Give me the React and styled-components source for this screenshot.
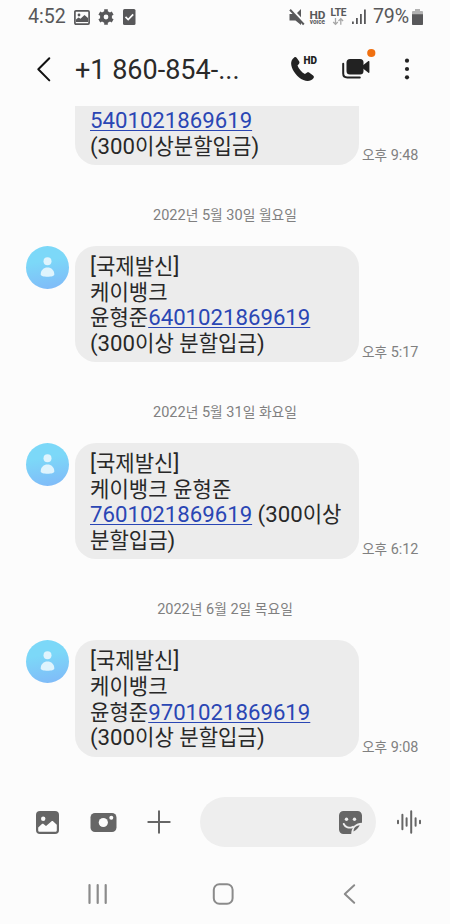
import React from "react";
import styled, { createGlobalStyle } from "styled-components";

const GlobalStyle = createGlobalStyle`
  body {
    margin: 0;
    background-color: #fcfcfc;
    font-family: Roboto, "Noto Sans CJK KR", sans-serif;
  }
`;

const Wrapper = styled.div`
  display: flex;
  flex-direction: column;
  width: 450px;
  height: 924px;
  overflow: hidden;
  background-color: #fcfcfc;
`;

const StatusBar = styled.div`
  display: flex;
  flex: none;
  align-items: center;
  height: 34px;
  padding: 0 26px 0 28px;
  box-sizing: border-box;
  color: #58585a;
  font-size: 19.6px;
  line-height: 34px;
`;

const StatusIcons = styled.div`
  display: flex;
  align-items: center;
  gap: ${(props) => props.$gap}px;
  margin-left: ${(props) => props.$left};
`;

const Battery = styled.span`
  margin-left: 6px;
  letter-spacing: -0.1px;
`;

const VoiceBadge = styled.div`
  display: flex;
  flex-direction: column;
  align-items: center;
  width: 17px;
  font-weight: 700;
`;

const VoiceText = styled.span`
  font-size: ${(props) => props.$size}px;
  line-height: ${(props) => props.$height}px;
`;

const Header = styled.header`
  display: flex;
  flex: none;
  align-items: center;
  height: 72px;
  padding: 0 39px 0 36px;
  box-sizing: border-box;
`;

const Title = styled.h1`
  flex: 1;
  margin: 0 0 0 23px;
  color: #2a2a2a;
  font-size: 27px;
  font-weight: 400;
  line-height: 34px;
  white-space: nowrap;
`;

const Actions = styled.div`
  display: flex;
  align-items: center;
`;

const IconButton = styled.button.attrs({ type: "button" })`
  display: flex;
  flex: none;
  margin: 0 0 0 ${(props) => props.$left || 0}px;
  padding: 0;
  border: none;
  background: none;
  cursor: pointer;
`;

const Chat = styled.main`
  display: flex;
  flex: none;
  flex-direction: column;
  height: 679px;
  overflow: hidden;
`;

const Row = styled.div`
  display: flex;
  flex: none;
  padding-left: ${(props) => (props.$cut ? 75 : 26)}px;
`;

const Avatar = styled.div`
  display: flex;
  flex: none;
  width: 43px;
  height: 43px;
  margin-right: 6px;
  border-radius: 50%;
  background: linear-gradient(170deg, #7cd8f8 35%, #80b8f8 100%);
`;

const Bubble = styled.div`
  width: 284px;
  height: ${(props) => (props.$cut ? 59 : 116.2)}px;
  padding: ${(props) => (props.$cut ? 2 : 8)}px 0 0 15px;
  box-sizing: border-box;
  border-radius: ${(props) => (props.$cut ? "0 0 21px 21px" : "21px")};
  background-color: #ececec;
  color: #282828;
  font-size: 22.2px;
`;

const Line = styled.div`
  height: 25.6px;
  line-height: 25.6px;
  white-space: pre;
`;

const Hangul = styled.span`
  font-size: 0.95em;
  line-height: 1;
`;

const Link = styled.a`
  color: #2a46b4;
  text-decoration: underline;
  text-decoration-thickness: 1px;
  text-underline-offset: 2px;
`;

const Time = styled.span`
  align-self: flex-end;
  margin-left: 3px;
  color: #808080;
  font-size: 14.4px;
  line-height: 18px;
  white-space: nowrap;
`;

const DateLabel = styled.div`
  display: flex;
  flex: none;
  justify-content: center;
  align-items: center;
  height: 81px;
  padding-top: 20px;
  box-sizing: border-box;
  color: #808080;
  font-size: 14.5px;
  line-height: 18px;
`;

const DateText = styled.span`
  white-space: pre;
`;

const Composer = styled.div`
  display: flex;
  flex: none;
  align-items: center;
  height: 74px;
  padding-left: 36px;
`;

const Input = styled.div`
  display: flex;
  align-items: center;
  justify-content: flex-end;
  width: 176px;
  height: 50px;
  margin-left: 29px;
  padding-right: 14px;
  box-sizing: border-box;
  border-radius: 25px;
  background-color: #eeeeee;
`;

const NavBar = styled.nav`
  display: flex;
  flex: none;
  align-items: center;
  height: 65px;
  padding: 4px 0 0 87px;
  box-sizing: border-box;
`;

const IconText = styled.text`
  font-family: Roboto, sans-serif;
  font-weight: ${(props) => props.$weight || 700};
`;

const messages = [
  {
    id: 1,
    cut: true,
    time: "오후 9:48",
    lines: ["5401021869619", "(300이상분할입금)"],
  },
  {
    id: 2,
    date: "2022년 5월 30일 월요일",
    time: "오후 5:17",
    lines: ["[국제발신]", "케이뱅크", "윤형준6401021869619", "(300이상 분할입금)"],
  },
  {
    id: 3,
    date: "2022년 5월 31일 화요일",
    time: "오후 6:12",
    lines: [
      "[국제발신]",
      "케이뱅크 윤형준",
      "7601021869619 (300이상",
      "분할입금)",
    ],
  },
  {
    id: 4,
    date: "2022년 6월 2일 목요일",
    time: "오후 9:08",
    lines: ["[국제발신]", "케이뱅크", "윤형준9701021869619", "(300이상 분할입금)"],
  },
];

// Hangul runs are set a little smaller, long numbers become links
function RichText({ text }) {
  return text
    .split(/(\d{13}|[가-힣]+)/)
    .filter(Boolean)
    .map((part, index) => {
      if (/^\d{13}$/.test(part)) {
        return <Link key={index}>{part}</Link>;
      }
      if (/^[가-힣]/.test(part)) {
        return <Hangul key={index}>{part}</Hangul>;
      }
      return <React.Fragment key={index}>{part}</React.Fragment>;
    });
}

function PersonIcon() {
  return (
    <svg width="43" height="43" viewBox="0 0 43 43" fill="#dff4fd">
      <circle cx="21.5" cy="15.3" r="4" />
      <path d="M14.7 28.5c0-4.3 2.900-7 6.800-7s6.800 2.700 6.800 7c0 1.300-3 2.300-6.800 2.300s-6.800-1-6.800-2.300z" />
    </svg>
  );
}

function Message({ message }) {
  return (
    <Row $cut={message.cut}>
      {!message.cut && (
        <Avatar>
          <PersonIcon />
        </Avatar>
      )}
      <Bubble $cut={message.cut}>
        {message.lines.map((line) => (
          <Line key={line}>
            <RichText text={line} />
          </Line>
        ))}
      </Bubble>
      <Time>
        <RichText text={message.time} />
      </Time>
    </Row>
  );
}

function StatusArea() {
  return (
    <StatusBar>
      4:52
      <StatusIcons $gap={8} $left="8px">
        <svg width="16" height="15" viewBox="0 0 16 15">
          <rect x="0.9" y="0.9" width="14.2" height="13.2" rx="1" fill="none" stroke="#58585a" strokeWidth="1.7" />
          <circle cx="5" cy="5" r="1.4" fill="#58585a" />
          <path d="M2 12V9.500l2.500-2 2 1.300L10.500 5 14 8v4z" fill="#58585a" />
        </svg>
        <svg width="16" height="16" viewBox="0 0 16 16">
          <circle cx="8" cy="8" r="4.2" fill="none" stroke="#58585a" strokeWidth="3.6" />
          <path d="M6.200.3h3.600v3H6.200zM6.200 12.700h3.600v3H6.200z" fill="#58585a" />
          <path d="M6.200.3h3.600v3H6.200zM6.200 12.700h3.600v3H6.200z" fill="#58585a" transform="rotate(60 8 8)" />
          <path d="M6.200.3h3.600v3H6.200zM6.200 12.700h3.600v3H6.200z" fill="#58585a" transform="rotate(120 8 8)" />
        </svg>
        <svg width="14" height="16" viewBox="0 0 14 16">
          <rect x="1" width="12.5" height="16" rx="1.5" fill="#58585a" />
          <path d="M3.500 7.800l2.700 2.800 5-5.200" fill="none" stroke="#fff" strokeWidth="1.7" />
        </svg>
      </StatusIcons>
      <StatusIcons $gap={4} $left="auto">
        <svg width="16" height="18" viewBox="0 0 16 18" fill="#58585a">
          <path d="M.500 6h5L12 12.500V17l-5.500-4.500h-6z" />
          <path d="M8 5l4-4v8.200z" />
          <path d="M1 1.800l13.800 14.700" stroke="#58585a" strokeWidth="2" />
        </svg>
        <VoiceBadge>
          <VoiceText $size={11.8} $height={10}>HD</VoiceText>
          <VoiceText $size={6.4} $height={5}>voice</VoiceText>
        </VoiceBadge>
        <svg width="17" height="20" viewBox="0 0 17 20">
          <IconText x="0.5" y="8.6" fontSize="10.2" textLength="16" fill="#58585a">LTE</IconText>
          <path d="M5.500 11v6.200M3.200 15l2.300 2.400L7.800 15M10.800 17.800v-6.200M8.500 14l2.300-2.400 2.300 2.400" fill="none" stroke="#a8a8a8" strokeWidth="1.3" />
        </svg>
        <svg width="16" height="16" viewBox="0 0 16 16" fill="#58585a">
          <path d="M1 12.500h1.800V15H1zM5 9h1.800v6H5zM9 5h1.800v10H9zM13 .500h1.800V15H13z" />
        </svg>
      </StatusIcons>
      <Battery>79%</Battery>
      <StatusIcons $gap={0} $left="2px">
        <svg width="13" height="18" viewBox="0 0 13 18">
          <path d="M4 1h5v2h2a1 1 0 0 1 1 1v12a1 1 0 0 1-1 1H2a1 1 0 0 1-1-1V4a1 1 0 0 1 1-1h2z" fill="#b2b2b2" />
          <path d="M1 6.300h11V16a1 1 0 0 1-1 1H2a1 1 0 0 1-1-1z" fill="#58585a" />
        </svg>
      </StatusIcons>
    </StatusBar>
  );
}

function ChatHeader() {
  return (
    <Header>
      <IconButton aria-label="뒤로">
        <svg width="16" height="28" viewBox="0 0 16 28">
          <path d="M13.300 2.200L2.300 13.200l11 11.200" fill="none" stroke="#111" strokeWidth="2" strokeLinecap="round" strokeLinejoin="round" />
        </svg>
      </IconButton>
      <Title>+1 860-854-...</Title>
      <Actions>
        <IconButton aria-label="전화">
          <svg width="29" height="32" viewBox="0 0 29 32" fill="#222">
            <path d="M4.200 3.500C5 2.800 6.100 3 6.800 3.900l2.300 3.400c.6.9.5 1.800-.2 2.600l-1.400 1.600c1.200 3.400 4.100 6.800 7.400 8.400l1.900-1.200c.9-.5 1.800-.5 2.600.1l3.700 2.800c1 .8 1.100 1.800.3 2.700-2.400 3-6.200 3.500-10 1.700C7.300 23.300 2.500 17 1.300 11.200c-.6-3.200.4-5.900 2.900-7.700z" />
            <IconText x="13.500" y="9.800" fontSize="11.500" textLength="13.500" lengthAdjust="spacingAndGlyphs" $weight={900}>HD</IconText>
          </svg>
        </IconButton>
        <IconButton $left={22} aria-label="영상통화">
          <svg width="36" height="50" viewBox="0 0 36 50">
            <path d="M2.200 18.800v9.700c0 2.500 1.500 3.900 4 3.900h12.600" fill="none" stroke="#222" strokeWidth="2" strokeLinecap="round" />
            <rect x="5.500" y="14" width="17" height="15.500" rx="3.500" fill="#222" />
            <path d="M22 20.300l5.400-4.200c.5-.4 1-.1 1 .5v10.600c0 .6-.5.9-1 .5L22 23.500z" fill="#222" />
            <circle cx="30.300" cy="8" r="4.100" fill="#f07010" />
          </svg>
        </IconButton>
        <IconButton $left={26} aria-label="더보기">
          <svg width="8" height="28" viewBox="0 0 8 28" fill="#222">
            <circle cx="4" cy="4.700" r="2.100" />
            <circle cx="4" cy="13" r="2.100" />
            <circle cx="4" cy="21.300" r="2.100" />
          </svg>
        </IconButton>
      </Actions>
    </Header>
  );
}

function App() {
  return (
    <>
      <GlobalStyle />
      <Wrapper>
        <StatusArea />
        <ChatHeader />
        <Chat>
          {messages.map((message) => (
            <React.Fragment key={message.id}>
              {message.date && (
                <DateLabel>
                  <DateText>
                    <RichText text={message.date} />
                  </DateText>
                </DateLabel>
              )}
              <Message message={message} />
            </React.Fragment>
          ))}
        </Chat>
        <Composer>
          <IconButton aria-label="갤러리">
            <svg width="23" height="23" viewBox="0 0 23 23">
              <rect width="23" height="23" rx="4" fill="#666" />
              <circle cx="7.200" cy="7.700" r="2.200" fill="#fcfcfc" />
              <path d="M2.200 16.500l3.700-3.400c.7-.5 1.200-.4 1.900.1l2.200 1.900 5.300-4.600c.7-.6 1.300-.6 2 0l3.500 3.200v5.500c0 1-.7 1.600-1.600 1.600H3.800c-1 0-1.600-.6-1.600-1.600z" fill="#fcfcfc" />
            </svg>
          </IconButton>
          <IconButton $left={31} aria-label="카메라">
            <svg width="27" height="19" viewBox="0 0 27 19">
              <rect x="0.500" width="26" height="19" rx="4.500" fill="#666" />
              <circle cx="13.300" cy="9.500" r="4.600" fill="#fcfcfc" />
              <circle cx="21.300" cy="4.700" r="2" fill="#fcfcfc" />
            </svg>
          </IconButton>
          <IconButton $left={30} aria-label="추가">
            <svg width="24" height="24" viewBox="0 0 24 24">
              <path d="M12 1.300v21.400M1.300 12h21.400" stroke="#666" strokeWidth="2" strokeLinecap="round" />
            </svg>
          </IconButton>
          <Input>
            <IconButton aria-label="스티커">
              <svg width="23" height="23" viewBox="0 0 23 23">
                <path d="M4.500 0h14C21 0 23 2 23 4.500v7.200c-6.300.2-10.300 3.600-10.800 11.300H4.500C2 23 0 21 0 18.500v-14C0 2 2 0 4.500 0z" fill="#666" />
                <circle cx="7.500" cy="8.300" r="1.700" fill="#eee" />
                <circle cx="15.500" cy="8.300" r="1.700" fill="#eee" />
                <path d="M4.800 13c1.500 3.200 5.300 4.500 9.200 2.800" fill="none" stroke="#eee" strokeWidth="2" strokeLinecap="round" />
                <path d="M14.500 20.500c.1-3.700 2-5.700 6.200-6.200-1.200 2.500-3.200 4.800-6.200 6.200z" fill="#666" />
              </svg>
            </IconButton>
          </Input>
          <IconButton $left={20} aria-label="음성">
            <svg width="27" height="24" viewBox="0 0 27 24">
              <path d="M2 10.800v2.400M6.400 4.800v14.400M10.600 8.300v7.400M15.200 1.200v21.600M19.600 8.300v7.400M24 10.800v2.400" stroke="#666" strokeWidth="2" strokeLinecap="round" />
            </svg>
          </IconButton>
        </Composer>
        <NavBar>
          <IconButton aria-label="최근 앱">
            <svg width="22" height="22" viewBox="0 0 22 22">
              <path d="M2.500 2v18M10.700 2v18M18.700 2v18" stroke="#8b8b8b" strokeWidth="2.200" strokeLinecap="round" />
            </svg>
          </IconButton>
          <IconButton $left={103} aria-label="홈">
            <svg width="22" height="22" viewBox="0 0 22 22">
              <rect x="1.800" y="1.300" width="18.800" height="19.400" rx="5.500" fill="none" stroke="#8b8b8b" strokeWidth="2" />
            </svg>
          </IconButton>
          <IconButton $left={109} aria-label="뒤로 가기">
            <svg width="14" height="22" viewBox="0 0 14 22">
              <path d="M11.200 2.200L1.800 11l9.400 8.800" fill="none" stroke="#8b8b8b" strokeWidth="2" strokeLinecap="round" strokeLinejoin="round" />
            </svg>
          </IconButton>
        </NavBar>
      </Wrapper>
    </>
  );
}

export default App;
